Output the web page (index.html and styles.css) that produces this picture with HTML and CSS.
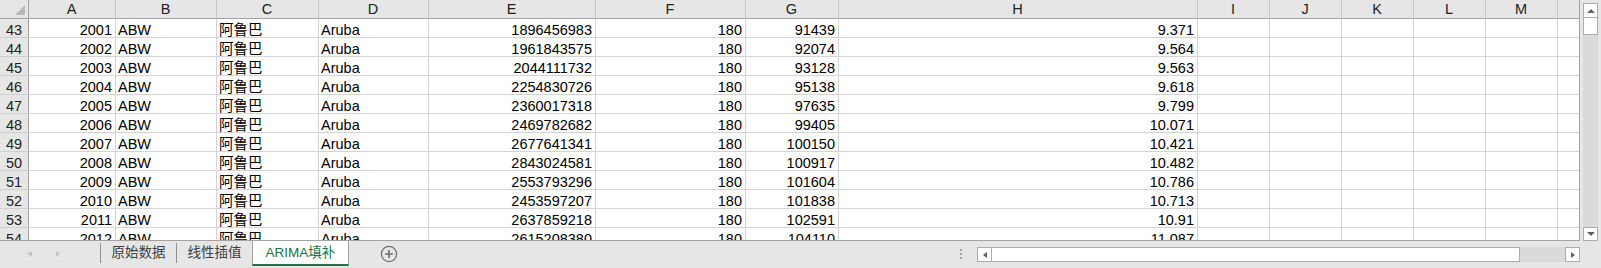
FILE: index.html
```html
<!DOCTYPE html>
<html>
	<head>
		<meta charset="utf-8" />
		<title>ARIMA填补</title>
		<link rel="stylesheet" href="styles.css">
	</head>
	<body>
		<div class="app">
			<div class="main">
				<!-- 表格区 -->
				<div class="sheet">
					<div class="row head">
						<div class="cell rh corner"><span class="tri"></span></div>
						<div class="cell ca">A</div>
						<div class="cell cb">B</div>
						<div class="cell cc">C</div>
						<div class="cell cd">D</div>
						<div class="cell ce">E</div>
						<div class="cell cf">F</div>
						<div class="cell cg">G</div>
						<div class="cell ch">H</div>
						<div class="cell cx">I</div>
						<div class="cell cx">J</div>
						<div class="cell cx">K</div>
						<div class="cell cx">L</div>
						<div class="cell cx">M</div>
						<div class="cell cn"></div>
					</div>
					<div class="row"><div class="cell rh">43</div><div class="cell ca num">2001</div><div class="cell cb">ABW</div><div class="cell cc">阿鲁巴</div><div class="cell cd">Aruba</div><div class="cell ce num">1896456983</div><div class="cell cf num">180</div><div class="cell cg num">91439</div><div class="cell ch num">9.371</div><div class="cell cx"></div><div class="cell cx"></div><div class="cell cx"></div><div class="cell cx"></div><div class="cell cx"></div><div class="cell cn"></div></div>
					<div class="row"><div class="cell rh">44</div><div class="cell ca num">2002</div><div class="cell cb">ABW</div><div class="cell cc">阿鲁巴</div><div class="cell cd">Aruba</div><div class="cell ce num">1961843575</div><div class="cell cf num">180</div><div class="cell cg num">92074</div><div class="cell ch num">9.564</div><div class="cell cx"></div><div class="cell cx"></div><div class="cell cx"></div><div class="cell cx"></div><div class="cell cx"></div><div class="cell cn"></div></div>
					<div class="row"><div class="cell rh">45</div><div class="cell ca num">2003</div><div class="cell cb">ABW</div><div class="cell cc">阿鲁巴</div><div class="cell cd">Aruba</div><div class="cell ce num">2044111732</div><div class="cell cf num">180</div><div class="cell cg num">93128</div><div class="cell ch num">9.563</div><div class="cell cx"></div><div class="cell cx"></div><div class="cell cx"></div><div class="cell cx"></div><div class="cell cx"></div><div class="cell cn"></div></div>
					<div class="row"><div class="cell rh">46</div><div class="cell ca num">2004</div><div class="cell cb">ABW</div><div class="cell cc">阿鲁巴</div><div class="cell cd">Aruba</div><div class="cell ce num">2254830726</div><div class="cell cf num">180</div><div class="cell cg num">95138</div><div class="cell ch num">9.618</div><div class="cell cx"></div><div class="cell cx"></div><div class="cell cx"></div><div class="cell cx"></div><div class="cell cx"></div><div class="cell cn"></div></div>
					<div class="row"><div class="cell rh">47</div><div class="cell ca num">2005</div><div class="cell cb">ABW</div><div class="cell cc">阿鲁巴</div><div class="cell cd">Aruba</div><div class="cell ce num">2360017318</div><div class="cell cf num">180</div><div class="cell cg num">97635</div><div class="cell ch num">9.799</div><div class="cell cx"></div><div class="cell cx"></div><div class="cell cx"></div><div class="cell cx"></div><div class="cell cx"></div><div class="cell cn"></div></div>
					<div class="row"><div class="cell rh">48</div><div class="cell ca num">2006</div><div class="cell cb">ABW</div><div class="cell cc">阿鲁巴</div><div class="cell cd">Aruba</div><div class="cell ce num">2469782682</div><div class="cell cf num">180</div><div class="cell cg num">99405</div><div class="cell ch num">10.071</div><div class="cell cx"></div><div class="cell cx"></div><div class="cell cx"></div><div class="cell cx"></div><div class="cell cx"></div><div class="cell cn"></div></div>
					<div class="row"><div class="cell rh">49</div><div class="cell ca num">2007</div><div class="cell cb">ABW</div><div class="cell cc">阿鲁巴</div><div class="cell cd">Aruba</div><div class="cell ce num">2677641341</div><div class="cell cf num">180</div><div class="cell cg num">100150</div><div class="cell ch num">10.421</div><div class="cell cx"></div><div class="cell cx"></div><div class="cell cx"></div><div class="cell cx"></div><div class="cell cx"></div><div class="cell cn"></div></div>
					<div class="row"><div class="cell rh">50</div><div class="cell ca num">2008</div><div class="cell cb">ABW</div><div class="cell cc">阿鲁巴</div><div class="cell cd">Aruba</div><div class="cell ce num">2843024581</div><div class="cell cf num">180</div><div class="cell cg num">100917</div><div class="cell ch num">10.482</div><div class="cell cx"></div><div class="cell cx"></div><div class="cell cx"></div><div class="cell cx"></div><div class="cell cx"></div><div class="cell cn"></div></div>
					<div class="row"><div class="cell rh">51</div><div class="cell ca num">2009</div><div class="cell cb">ABW</div><div class="cell cc">阿鲁巴</div><div class="cell cd">Aruba</div><div class="cell ce num">2553793296</div><div class="cell cf num">180</div><div class="cell cg num">101604</div><div class="cell ch num">10.786</div><div class="cell cx"></div><div class="cell cx"></div><div class="cell cx"></div><div class="cell cx"></div><div class="cell cx"></div><div class="cell cn"></div></div>
					<div class="row"><div class="cell rh">52</div><div class="cell ca num">2010</div><div class="cell cb">ABW</div><div class="cell cc">阿鲁巴</div><div class="cell cd">Aruba</div><div class="cell ce num">2453597207</div><div class="cell cf num">180</div><div class="cell cg num">101838</div><div class="cell ch num">10.713</div><div class="cell cx"></div><div class="cell cx"></div><div class="cell cx"></div><div class="cell cx"></div><div class="cell cx"></div><div class="cell cn"></div></div>
					<div class="row"><div class="cell rh">53</div><div class="cell ca num">2011</div><div class="cell cb">ABW</div><div class="cell cc">阿鲁巴</div><div class="cell cd">Aruba</div><div class="cell ce num">2637859218</div><div class="cell cf num">180</div><div class="cell cg num">102591</div><div class="cell ch num">10.91</div><div class="cell cx"></div><div class="cell cx"></div><div class="cell cx"></div><div class="cell cx"></div><div class="cell cx"></div><div class="cell cn"></div></div>
					<div class="row"><div class="cell rh">54</div><div class="cell ca num">2012</div><div class="cell cb">ABW</div><div class="cell cc">阿鲁巴</div><div class="cell cd">Aruba</div><div class="cell ce num">2615208380</div><div class="cell cf num">180</div><div class="cell cg num">104110</div><div class="cell ch num">11.087</div><div class="cell cx"></div><div class="cell cx"></div><div class="cell cx"></div><div class="cell cx"></div><div class="cell cx"></div><div class="cell cn"></div></div>
				</div>
				<!-- 竖向滚动条 -->
				<div class="vscroll">
					<div class="vbar">
						<div class="sbtn"><span class="arr up"></span></div>
						<div class="vthumb"></div>
						<div class="vtrack"></div>
						<div class="sbtn down-btn"><span class="arr down"></span></div>
					</div>
				</div>
			</div>
			<!-- 工作表标签 -->
			<div class="tabbar">
				<div class="nav">
					<span class="arr left light"></span>
					<span class="arr right light"></span>
				</div>
				<div class="sep"></div>
				<div class="tab">原始数据</div>
				<div class="sep"></div>
				<div class="tab">线性插值</div>
				<div class="tab active">ARIMA填补</div>
				<div class="add">
					<svg width="18" height="18" viewBox="0 0 18 18">
						<circle cx="9" cy="9" r="7.6" fill="none" stroke="#6f6f6f" stroke-width="1.3" />
						<path d="M9 5v8M5 9h8" stroke="#6f6f6f" stroke-width="1.6" />
					</svg>
				</div>
				<div class="spacer"></div>
				<div class="dots"><i></i><i></i><i></i></div>
				<div class="hscroll">
					<div class="sbtn hbtn"><span class="arr left"></span></div>
					<div class="hthumb"></div>
					<div class="htrack"></div>
					<div class="sbtn hbtn"><span class="arr right"></span></div>
				</div>
			</div>
		</div>
	</body>
</html>
```
FILE: styles.css
```css
body {
	margin: 0;
	background-color: #e6e6e6;
	font-family: "Liberation Sans", "Noto Sans CJK SC", sans-serif;
}
.app {
	width: 1601px;
	height: 268px;
	overflow: hidden;
}
.main {
	display: flex;
	height: 241px;
}

/** 表格 **/
.sheet {
	width: 1580px;
	height: 241px;
	box-sizing: border-box;
	border-right: 1px solid #a3a3a3;
	border-bottom: 1px solid #a3a3a3;
	background-color: #fff;
	overflow: hidden;
}
.row {
	display: flex;
	height: 19px;
}
.cell {
	box-sizing: border-box;
	height: 19px;
	border-right: 1px solid #d4d4d4;
	border-bottom: 1px solid #d4d4d4;
	padding: 0 3px 0 2px;
	font-size: 14.5px;
	line-height: 22px;
	color: #000;
	white-space: nowrap;
	flex-shrink: 0;
}
.num {
	text-align: right;
}
.rh {
	width: 29px;
	padding: 0;
	text-align: center;
	background-color: #e6e6e6;
	border-right-color: #a3a3a3;
	border-bottom-color: #d0d0d0;
	color: #222;
}
.ca { width: 87px; }
.cb { width: 101px; }
.cc { width: 102px; }
.cd { width: 110px; }
.ce { width: 167px; }
.cf { width: 150px; }
.cg { width: 93px; }
.ch { width: 359px; }
.cx { width: 72px; }
.cn {
	width: 21px;
	border-right: 0;
}
.head .cell {
	background-color: #e6e6e6;
	border-right-color: #c6c6c6;
	border-bottom-color: #a3a3a3;
	text-align: center;
	line-height: 18px;
	color: #222;
}
.head .corner {
	display: flex;
	justify-content: flex-end;
	align-items: flex-end;
	padding: 0 3px 3px 0;
	border-right-color: #a3a3a3;
}
.corner .tri {
	width: 0;
	height: 0;
	border-left: 10px solid transparent;
	border-bottom: 10px solid #b8b8b8;
}

/** 滚动条 **/
.vscroll {
	width: 21px;
	padding: 3px 0 0 3px;
	box-sizing: border-box;
}
.vbar {
	width: 15px;
	height: 238px;
	display: flex;
	flex-direction: column;
}
.sbtn {
	box-sizing: border-box;
	width: 15px;
	height: 15px;
	background-color: #fff;
	border: 1px solid #ababab;
	display: flex;
	align-items: center;
	justify-content: center;
	flex-shrink: 0;
}
.vthumb {
	height: 17px;
	box-sizing: border-box;
	background-color: #fff;
	border: 1px solid #ababab;
	border-top: 0;
}
.vtrack {
	flex: 1;
	background-color: #dadada;
}
.down-btn {
	height: 14px;
}
.arr {
	width: 0;
	height: 0;
	display: block;
}
.arr.up {
	border-left: 4px solid transparent;
	border-right: 4px solid transparent;
	border-bottom: 4px solid #606060;
}
.arr.down {
	border-left: 4px solid transparent;
	border-right: 4px solid transparent;
	border-top: 4px solid #606060;
}
.arr.left {
	border-top: 3px solid transparent;
	border-bottom: 3px solid transparent;
	border-right: 4px solid #606060;
}
.arr.right {
	border-top: 3px solid transparent;
	border-bottom: 3px solid transparent;
	border-left: 4px solid #606060;
}
.arr.light {
	border-right-color: #c4c4c4;
	border-left-color: #c4c4c4;
}
.arr.left.light {
	border-right-width: 5px;
}

/** 工作表标签 **/
.tabbar {
	display: flex;
	height: 27px;
}
.nav {
	width: 100px;
	display: flex;
	align-items: center;
	padding: 0 0 2px 27px;
	box-sizing: border-box;
}
.nav .arr.right {
	margin-left: 24px;
}
.sep {
	width: 1px;
	height: 20px;
	margin-top: 2px;
	background-color: #8f8f8f;
}
.tab {
	width: 75px;
	height: 25px;
	line-height: 24px;
	text-align: center;
	font-size: 13.5px;
	color: #404040;
}
.tab.active {
	width: 97px;
	box-sizing: border-box;
	background-color: #fff;
	border-left: 1px solid #a3a3a3;
	border-right: 1px solid #a3a3a3;
	border-bottom: 2px solid #217346;
	color: #217346;
}
.add {
	margin: 4px 0 0 31px;
	width: 18px;
	height: 18px;
}
.spacer {
	flex: 1;
}
.dots {
	width: 16px;
	margin-right: 8px;
	display: flex;
	flex-direction: column;
	align-items: center;
	padding-top: 8px;
	box-sizing: border-box;
}
.dots i {
	width: 2px;
	height: 2px;
	margin-bottom: 2px;
	background-color: #a6a6a6;
}
.hscroll {
	width: 603px;
	height: 15px;
	margin: 6px 21px 0 0;
	display: flex;
}
.hthumb {
	width: 528px;
	box-sizing: border-box;
	background-color: #fff;
	border: 1px solid #ababab;
	border-left: 0;
}
.htrack {
	flex: 1;
	background-color: #dadada;
}
```
